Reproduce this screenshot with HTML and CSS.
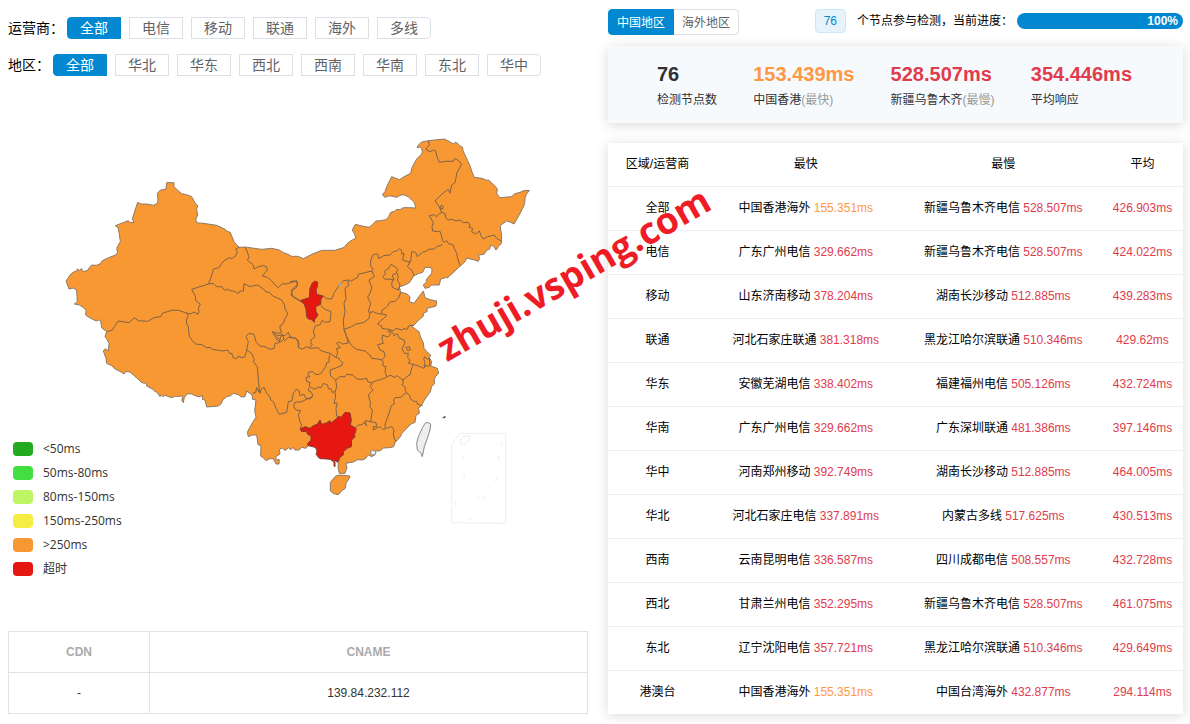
FILE: index.html
```
<!DOCTYPE html>
<html lang="zh-CN">
<head>
    <meta charset="UTF-8">
    <meta name="viewport" content="width=device-width, initial-scale=1.0">
    <title>节点检测</title>
    <link rel="stylesheet" href="styles.css">
</head>
<body>
    <div class="container">
        <div class="left">
            <div class="filter">
                <span class="filter-label">运营商：</span>
                <div class="filter-group">
                    <button class="active">全部</button>
                    <button>电信</button>
                    <button>移动</button>
                    <button>联通</button>
                    <button>海外</button>
                    <button>多线</button>
                </div>
            </div>
            <div class="filter">
                <span class="filter-label">地区：</span>
                <div class="filter-group">
                    <button class="active">全部</button>
                    <button>华北</button>
                    <button>华东</button>
                    <button>西北</button>
                    <button>西南</button>
                    <button>华南</button>
                    <button>东北</button>
                    <button>华中</button>
                </div>
            </div>
            <div class="map">
                <svg viewBox="24 228 1740 1665" role="img" aria-label="中国地图">
                    <!-- mainland -->
                    <path class="land" d="M198,843 L203,836 210,825 219,817 230,813 232,807 238,811 245,806 250,815 263,811 268,803 275,795 289,796 300,792 307,782 326,773 347,765 353,757 350,745 355,735 361,725 358,704 355,685 346,677 364,670 385,662 389,667 402,668 397,657 404,634 413,607 423,612 441,612 460,616 472,610 474,601 472,580 480,571 498,567 500,548 522,548 522,560 532,570 545,581 560,584 575,590 580,599 585,608 593,617 590,628 593,645 588,656 588,665 596,669 610,670 650,676 663,682 675,688 683,695 690,696 696,710 702,725 710,734 717,742 735,741 785,748 815,745 838,750 850,758 862,762 875,769 895,769 903,773 910,776 935,763 965,751 1005,751 1033,742 1040,732 1048,725 1068,714 1063,701 1057,690 1066,673 1086,678 1107,682 1117,674 1128,663 1142,662 1158,659 1166,650 1172,637 1184,634 1190,628 1200,629 1210,623 1230,623 1248,624 1243,608 1235,600 1225,590 1210,584 1200,586 1190,592 1175,588 1165,588 1155,592 1150,588 1148,582 1155,575 1160,560 1175,530 1198,539 1216,528 1232,520 1235,505 1243,489 1252,475 1265,462 1267,455 1265,445 1258,441 1251,443 1256,434 1265,426 1285,422 1333,417 1347,424 1360,432 1366,427 1373,430 1379,437 1388,442 1389,452 1395,465 1403,482 1410,497 1416,516 1423,532 1446,535 1460,541 1466,540 1478,552 1487,560 1492,568 1490,580 1499,593 1535,590 1543,582 1560,577 1572,572 1588,571 1579,583 1575,595 1574,611 1568,625 1553,653 1542,672 1530,666 1520,663 1500,677 1505,705 1504,730 1496,739 1488,750 1481,739 1473,735 1468,748 1460,751 1452,763 1435,765 1439,775 1435,784 1420,779 1400,774 1395,785 1382,797 1343,833 1337,833 1322,837 1318,855 1295,855 1287,862 1275,865 1270,855 1280,845 1278,840 1288,827 1295,820 1296,809 1292,803 1275,802 1268,817 1255,821 1242,827 1228,848 1210,857 1198,860 1202,877 1220,881 1230,890 1228,905 1242,910 1253,895 1270,873 1275,893 1290,899 1310,903 1308,918 1295,922 1280,925 1282,934 1270,940 1270,949 1257,959 1245,972 1237,980 1248,989 1257,995 1262,1012 1270,1029 1272,1045 1281,1056 1292,1065 1288,1072 1295,1085 1292,1098 1312,1105 1316,1120 1307,1129 1302,1140 1304,1150 1295,1160 1290,1177 1280,1190 1273,1201 1265,1215 1256,1225 1258,1240 1248,1246 1245,1267 1233,1272 1220,1285 1206,1300 1199,1313 1185,1328 1181,1340 1170,1343 1150,1344 1141,1352 1127,1353 1125,1364 1115,1370 1105,1365 1095,1377 1085,1380 1073,1379 1060,1386 1037,1390 1041,1402 1035,1420 1018,1420 1014,1402 1015,1390 1005,1380 955,1373 947,1342 925,1337 918,1345 905,1342 898,1350 885,1350 879,1342 873,1349 865,1343 855,1352 848,1344 838,1348 840,1362 827,1370 829,1379 838,1379 837,1392 828,1392 820,1376 809,1376 798,1382 791,1374 782,1368 783,1337 774,1334 770,1305 757,1305 745,1310 742,1297 748,1285 758,1267 768,1252 764,1232 768,1200 758,1198 756,1185 740,1173 735,1190 724,1191 715,1184 700,1180 692,1187 680,1190 668,1200 664,1211 655,1218 620,1221 615,1200 607,1198 607,1187 597,1190 585,1187 575,1182 563,1181 553,1192 550,1208 545,1200 548,1194 545,1187 535,1190 527,1188 515,1193 502,1189 495,1185 490,1190 483,1184 480,1190 473,1179 462,1172 459,1168 440,1158 439,1150 425,1148 414,1137 400,1125 390,1116 378,1114 372,1122 360,1114 345,1107 335,1097 320,1090 318,1075 310,1053 316,1046 325,1053 327,1030 321,1018 315,1010 320,995 305,983 302,962 295,960 289,963 278,958 267,952 257,945 258,932 253,925 239,915 223,912 232,905 230,870 219,864 207,867 Z"/>

                    <!-- western provinces -->
                    <g class="border" transform="translate(150 510)">
                        <path d="M170,485 L188,480 193,470 205,453 237,458 246,450 252,443 265,452 293,454 312,443 333,440 337,430 365,421 385,421 410,429 422,432 432,426 444,433 447,424 445,415 451,402 438,393 436,378 425,358 475,342"/>
                        <path d="M475,342 L484,320 490,297 507,293 515,280 525,270 540,263 544,266 557,258 562,245 556,238 567,232"/>
                        <path d="M475,342 L490,340 495,346 500,350 515,350 525,362 532,357 540,362 551,363 565,371 570,363 580,363 582,341 590,345 600,350 610,347 622,345 630,350 640,357 647,365 660,368 668,378 680,383 695,390 703,403 705,417 714,432 705,445 700,460 690,467 690,475 695,488 683,490 667,485 675,500 690,508 688,518 675,520 672,535 660,538 645,530 630,528 618,515 612,493 597,490 588,500 595,515 590,540"/>
                        <path d="M410,429 L415,438 410,447 409,460 415,470 418,500 427,512 437,522 455,524 470,533 480,532 487,538 505,541 520,543 533,540 540,552 545,549 549,563 560,566 565,558 575,563 585,560 590,540"/>
                        <path d="M590,540 L605,550 612,567 611,576 622,590 626,640 629,665 620,652 617,668 608,670"/>
                        <path d="M585,231 L592,246 597,262 592,270 610,285 612,297 625,290 640,287 650,290 652,300 637,318 652,322 665,332 675,345 685,353 697,341 710,342 722,338 740,333 743,345 737,355 727,360 723,375 733,383 748,392"/>
                        <path d="M690,508 L695,495 705,497 715,487 720,500 740,507 747,520 745,533"/>
                        <path d="M672,487 L680,498 698,494 702,507 692,516 678,507"/>
                    </g>

                    <!-- north east -->
                    <g class="border" transform="translate(870 360)">
                        <path d="M415,62 L418,75 407,88 420,95 430,90 437,92 440,108 448,127 466,124 490,124 495,115 505,122 515,132 500,160 498,174 495,188 485,195 480,220 475,208 455,223 435,243 444,255 450,265 453,256 460,259 458,267 450,265 455,278"/>
                        <path d="M455,278 L465,280 467,292 473,300 487,298 498,303 510,300 520,308 535,307 540,315 537,322 548,325 545,335 557,342 568,333 573,347 580,357 593,350 605,347 613,345 620,355 634,363"/>
                        <path d="M455,278 L446,282 440,290 432,284 418,287 430,308 426,320 428,333 445,335 451,335 455,350 458,363"/>
                        <path d="M458,363 L463,367 470,362 476,372 488,373 493,385 500,400 503,415 510,437"/>
                        <path d="M458,374 L440,380 432,387 415,388 412,392 398,397 382,410 377,397 365,395 362,425 355,427"/>
                        <path d="M245,450 L250,446 242,440 242,420 250,403 263,402 266,416 281,407 300,405 310,395 322,392 328,386 335,391 335,402 342,400 338,420 360,427 352,440 366,452 372,467"/>
                    </g>

                    <!-- north and centre -->
                    <g class="border" transform="translate(870 780)">
                        <path d="M0,65 L20,62 22,75 12,82 4,92 8,108 30,122"/>
                        <path d="M100,108 L110,116 125,117 133,98 143,82 160,62 178,60"/>
                        <path class="gap" d="M145,76 L156,67 150,79 Z"/>
                        <path d="M92,137 L105,148 123,155 120,185 103,187 97,180 91,194 75,198 70,215 75,230 63,240 62,248 67,255 58,262"/>
                        <path d="M-18,243 L-5,232 18,235 24,242 25,262 36,268 50,260 60,265 85,263 91,271 105,276 120,280 137,292"/>
                        <path d="M137,292 L143,280 140,265 151,263 140,250 148,246 158,252 175,249 170,230 162,208"/>
                        <path d="M178,60 L173,66 177,75 165,85 168,115 162,130 165,155 160,182 162,208"/>
                        <path d="M178,60 L183,64 195,56 203,53 205,43 222,39 240,34 250,36"/>
                        <path d="M245,32 L253,50 237,60 242,75 246,81 240,100 233,112 242,130 235,155 240,157"/>
                        <path d="M240,157 L237,175 224,186 210,190 198,192 185,200 162,208"/>
                        <path d="M240,157 L250,155 263,161 275,162 276,150 285,145 295,135 299,126 315,124 325,115 332,97"/>
                        <path d="M278,50 L287,42 283,34 294,27 303,13 318,22 323,29 317,41 307,45 312,60 295,57 285,58 Z"/>
                        <path d="M320,38 L325,50 322,60 330,75 325,90 307,82 305,70 310,58"/>
                        <path d="M275,162 L290,165 282,175 273,181 263,192 275,198 275,205 295,208 310,212 318,205 335,210 345,205 350,210 356,198 370,195"/>
                        <path d="M293,214 L303,220 296,230 290,230 278,225 276,238 280,250 263,254 270,270 282,275 285,290 275,300"/>
                        <path d="M162,208 L170,230 178,247 188,260 200,268 225,273 240,285 245,295 264,297 275,300"/>
                        <path d="M295,210 L308,217 312,227 322,221 327,234 342,240 345,250 336,265 343,280 355,280 353,293 360,300 355,310 370,313"/>
                        <path d="M348,262 L358,260 361,270 352,271 Z"/>
                        <path d="M402,318 L405,307 401,297 405,290 412,298 418,294 420,318 Z"/>
                        <path d="M370,313 L385,318 402,325 407,316"/>
                        <path d="M370,313 L366,323 363,333 360,345 350,350 340,360"/>
                        <path d="M275,300 L280,307 278,317 288,320 285,334 290,350 303,346 312,353 320,347 340,360"/>
                        <path d="M120,283 L117,294 118,306 110,308 108,318 95,338 85,344 75,342 68,335 57,336 53,345 60,350 48,352 50,365 60,367 58,380 70,385"/>
                        <path d="M137,292 L147,295 149,300 158,308 156,316 135,325 120,330 122,348 137,360"/>
                    </g>

                    <!-- south -->
                    <g class="border" transform="translate(690 1080)">
                        <path d="M82,90 L90,100 95,85 103,83 110,100 120,110 122,120 130,125 138,145 148,163 170,157 175,125 186,122 190,100 198,88 207,92 210,107 222,103 227,114 240,117 248,108 245,97 236,93 236,84"/>
                        <path d="M248,110 L225,120 215,125 195,127 191,139 198,150 212,152 205,165 210,185 215,195 210,207"/>
                        <path d="M250,90 L255,84 260,86 265,80 272,84 280,70 293,75 295,87 303,86 306,97 315,95"/>
                        <path d="M317,60 L320,80 315,97 317,108 312,130 322,129 318,145 320,170"/>
                        <path d="M317,60 L330,50 345,50 350,43 368,45 380,56 390,58 400,57 410,55 414,66 424,68"/>
                        <path d="M427,68 L420,80 430,90 422,97 415,105 422,130 419,140 427,150 422,185"/>
                        <path d="M424,68 L440,62 455,58 470,52"/>
                        <path d="M518,60 L520,70 515,74 525,80 526,92 530,98 522,102"/>
                        <path d="M530,98 L540,107 540,115 550,124 560,124 563,133 578,137"/>
                        <path d="M522,102 L513,112 495,113 490,120 494,130 483,138 480,150 472,175 466,190 465,205"/>
                        <path d="M465,205 L475,203 485,200 492,210 490,225 497,245"/>
                        <path d="M376,203 L385,195 397,194 402,187 410,198 405,182 422,185 438,188 440,200 430,200 430,210 440,204 450,200 458,208 465,208"/>
                    </g>

                    <g transform="translate(690 1080)">
                        <path class="land" d="M317,348 L330,345 360,348 358,355 348,370 346,385 335,392 325,404 311,401 301,393 301,367 Z"/>
                        <path class="timeout" d="M210,207 L225,200 240,205 250,197 262,193 270,180 275,193 288,190 300,182 303,189 320,176 325,169 334,172 345,157 360,159 364,180 361,195 378,205 377,217 373,223 375,230 365,240 364,260 352,265 340,275 340,285 330,291 325,305 313,301 310,305 300,297 270,296 258,283 263,273 257,262 233,256 233,250 243,241 243,228 233,223 229,214 215,215 Z"/>
                        <path class="timeout" d="M312,304 V318 L315,320 V304"/>
                        <path class="empty" d="M421,275 L429,270 438,276 435,284 424,285 Z"/>
                        <path class="empty" d="M592,187 L602,192 600,210 592,235 583,260 577,290 572,278 562,270 560,250 565,230 578,202 585,190 Z"/>
                        <path class="islet" d="M638,173 L646,169 644,174 Z"/>
                    </g>
                    <path class="timeout" transform="translate(870 780)" d="M75,63 L83,67 82,80 78,90 80,103 100,108 93,117 92,133 77,140 78,155 84,165 73,180 73,187 63,178 55,177 50,170 48,148 43,132 30,122 45,117 58,113 60,85 67,69 Z"/>

                    <!-- south china sea inset -->
                    <g class="inset" transform="translate(690 1080)">
                        <path d="M690,220 H827 V490 L665,488 V253 Z"/>
                        <path d="M698,230 L718,226 717,238 704,255 691,250 692,238 Z"/>
                        <path d="M818,243 L812,257 M696,287 L701,299 M806,288 L805,301 M704,346 L701,358 M801,349 L796,364 M675,424 L676,437 M690,418 H694 M741,415 L748,411 M767,409 L758,422 M714,478 L725,475"/>
                    </g>
                </svg>
                <ul class="legend">
                    <li><i class="c50"></i>&lt;50ms</li>
                    <li><i class="c80"></i>50ms-80ms</li>
                    <li><i class="c150"></i>80ms-150ms</li>
                    <li><i class="c250"></i>150ms-250ms</li>
                    <li><i class="slow"></i>&gt;250ms</li>
                    <li><i class="out"></i>超时</li>
                </ul>
            </div>
            <table class="cdn">
                <tr><th>CDN</th><th>CNAME</th></tr>
                <tr><td>-</td><td>139.84.232.112</td></tr>
            </table>
        </div>

        <div class="right">
            <div class="topbar">
                <div class="tabs">
                    <button class="active">中国地区</button><button>海外地区</button>
                </div>
                <div class="status">
                    <span class="tag">76</span>
                    <span class="status-text">个节点参与检测，当前进度：</span>
                    <div class="progress">100%</div>
                </div>
            </div>
            <div class="stats">
                <div class="stat"><b>76</b><span>检测节点数</span></div>
                <div class="stat"><b class="orange">153.439ms</b><span>中国香港<em>(最快)</em></span></div>
                <div class="stat"><b class="red">528.507ms</b><span>新疆乌鲁木齐<em>(最慢)</em></span></div>
                <div class="stat"><b class="red">354.446ms</b><span>平均响应</span></div>
            </div>
            <table class="result">
                <colgroup><col class="col-name"><col class="col-node"><col class="col-node"><col class="col-avg"></colgroup>
                <tr><th>区域/运营商</th><th>最快</th><th>最慢</th><th>平均</th></tr>
                <tr><td>全部</td><td>中国香港海外 <span class="orange">155.351ms</span></td><td>新疆乌鲁木齐电信 <span class="red">528.507ms</span></td><td class="red">426.903ms</td></tr>
                <tr><td>电信</td><td>广东广州电信 <span class="red">329.662ms</span></td><td>新疆乌鲁木齐电信 <span class="red">528.507ms</span></td><td class="red">424.022ms</td></tr>
                <tr><td>移动</td><td>山东济南移动 <span class="red">378.204ms</span></td><td>湖南长沙移动 <span class="red">512.885ms</span></td><td class="red">439.283ms</td></tr>
                <tr><td>联通</td><td>河北石家庄联通 <span class="red">381.318ms</span></td><td>黑龙江哈尔滨联通 <span class="red">510.346ms</span></td><td class="red">429.62ms</td></tr>
                <tr><td>华东</td><td>安徽芜湖电信 <span class="red">338.402ms</span></td><td>福建福州电信 <span class="red">505.126ms</span></td><td class="red">432.724ms</td></tr>
                <tr><td>华南</td><td>广东广州电信 <span class="red">329.662ms</span></td><td>广东深圳联通 <span class="red">481.386ms</span></td><td class="red">397.146ms</td></tr>
                <tr><td>华中</td><td>河南郑州移动 <span class="red">392.749ms</span></td><td>湖南长沙移动 <span class="red">512.885ms</span></td><td class="red">464.005ms</td></tr>
                <tr><td>华北</td><td>河北石家庄电信 <span class="red">337.891ms</span></td><td>内蒙古多线 <span class="red">517.625ms</span></td><td class="red">430.513ms</td></tr>
                <tr><td>西南</td><td>云南昆明电信 <span class="red">336.587ms</span></td><td>四川成都电信 <span class="red">508.557ms</span></td><td class="red">432.728ms</td></tr>
                <tr><td>西北</td><td>甘肃兰州电信 <span class="red">352.295ms</span></td><td>新疆乌鲁木齐电信 <span class="red">528.507ms</span></td><td class="red">461.075ms</td></tr>
                <tr><td>东北</td><td>辽宁沈阳电信 <span class="red">357.721ms</span></td><td>黑龙江哈尔滨联通 <span class="red">510.346ms</span></td><td class="red">429.649ms</td></tr>
                <tr><td>港澳台</td><td>中国香港海外 <span class="orange">155.351ms</span></td><td>中国台湾海外 <span class="red">432.877ms</span></td><td class="red">294.114ms</td></tr>
            </table>
        </div>
        <div class="watermark">zhuji.vsping.com</div>
    </div>
</body>
</html>
```
FILE: styles.css
```
* {
    box-sizing: border-box;
}
body {
    margin: 0;
    font-family: "Liberation Sans", "Noto Sans CJK SC", sans-serif;
    font-size: 12px;
    line-height: 18px;
    color: #000;
    background: #fff;
}
button {
    font-family: inherit;
    cursor: pointer;
}
.container {
    position: relative;
    display: grid;
    grid-template-columns: minmax(0, 580fr) minmax(0, 575fr);
    gap: 20px;
    padding: 9px 7px 10px 8px;
}

/* left side */
.left {
    padding-top: 8px;
}
.filter {
    display: flex;
    align-items: center;
    gap: 3px;
    margin-bottom: 15px;
    font-size: 14px;
}
.filter + .filter {
    margin-bottom: 0;
}
.filter-group {
    display: flex;
    gap: 8px;
}
.filter-group button {
    width: 54px;
    height: 22px;
    padding: 0;
    border: 1px solid #dcdfe6;
    background: #fff;
    color: #606266;
    font-size: 14px;
    line-height: 20px;
}
.filter-group button:first-child {
    border-radius: 4px 0 0 4px;
}
.filter-group button:last-child {
    border-radius: 0 4px 4px 0;
}
.filter-group button.active,
.tabs button.active {
    background: #0188d1;
    border-color: #0188d1;
    color: #fff;
}
.map {
    position: relative;
}
.map svg {
    display: block;
    width: 100%;
}
.land, .timeout, .empty {
    stroke: #8c7a68;
    stroke-width: 3;
    stroke-linejoin: round;
}
.land {
    fill: #f79833;
}
.timeout {
    fill: #e61610;
    stroke: #8a3a35;
}
.empty {
    fill: #eee;
    stroke: #888;
}
.islet {
    fill: #444;
    stroke: #444;
    stroke-width: 2;
}
.border {
    fill: none;
    stroke: #806347;
    stroke-width: 3;
    stroke-linejoin: round;
}
.border .gap {
    fill: #ddd;
    stroke: #999;
}
.inset {
    fill: none;
    stroke: #eee;
    stroke-width: 3;
}
.legend {
    position: absolute;
    left: 5px;
    bottom: 50px;
    margin: 0;
    padding: 0;
    list-style: none;
    font-family: "Open Sans", "Noto Sans CJK SC", sans-serif;
    color: #333;
}
.legend li {
    display: flex;
    align-items: center;
    gap: 10px;
    height: 24px;
}
.legend i {
    width: 20px;
    height: 14px;
    border-radius: 4px;
}
.c50 { background: #23aa1e; }
.c80 { background: #43df40; }
.c150 { background: #bef663; }
.c250 { background: #f6ed44; }
.slow { background: #f79833; }
.out { background: #e61610; }

.cdn {
    width: 100%;
    border-collapse: collapse;
    text-align: center;
    color: #333;
}
.cdn th, .cdn td {
    height: 41px;
    padding: 0;
    border: 1px solid #dfe2ea;
}
.cdn th {
    color: #aaa;
}
.cdn th:first-child {
    width: 141px;
}

/* right side */
.topbar {
    display: flex;
    justify-content: space-between;
    align-items: flex-start;
    margin-bottom: 11px;
}
.tabs {
    display: flex;
}
.tabs button {
    height: 26px;
    padding: 0 8px 2px;
    border: 1px solid #dcdfe6;
    background: #fff;
    color: #606266;
    font-size: 12px;
}
.tabs button:first-child {
    border-radius: 4px 0 0 4px;
}
.tabs button:last-child {
    border-left: 0;
    border-radius: 0 4px 4px 0;
}
.status {
    display: flex;
    align-items: center;
    height: 24px;
}
.tag {
    padding: 2px 8px;
    border: 1px solid #cce7f6;
    border-radius: 4px;
    background: #e6f3fa;
    color: #0188d1;
    line-height: 18px;
    margin-right: 11px;
}
.status-text {
    margin-right: 4px;
}
.progress {
    width: 166px;
    height: 16px;
    padding-right: 5px;
    border-radius: 8px;
    background: #0188d1;
    color: #fff;
    font-weight: bold;
    line-height: 16px;
    text-align: right;
}
.stats {
    display: flex;
    justify-content: space-between;
    height: 77px;
    margin-bottom: 20px;
    padding: 16px 51px 0 49px;
    background: #f6fafd;
    box-shadow: 0 2px 12px rgba(0,0,0,0.15);
}
.stat b {
    display: block;
    margin-bottom: 5px;
    font-size: 20px;
    line-height: 24px;
    color: #303133;
}
.stat span {
    color: #303133;
}
.stat em {
    font-style: normal;
    color: #999;
}
.stat .orange, .orange {
    color: #ff9845;
}
.stat .red, .red {
    color: #e03c4c;
}
.result {
    width: 100%;
    table-layout: fixed;
    border-collapse: collapse;
    text-align: center;
    box-shadow: 0 2px 12px rgba(0,0,0,0.15);
}
.result th, .result td {
    height: 44px;
    padding: 0 0 1px;
    border-bottom: 1px solid #ebeef5;
}
.result th {
    height: 43px;
    font-weight: normal;
}
.result tr:last-child td {
    border-bottom: 0;
}
.col-name { width: 99px; }
.col-avg { width: 81px; }

.watermark {
    position: absolute;
    left: 452px;
    top: 323px;
    font-family: "Open Sans", sans-serif;
    font-size: 37px;
    font-weight: bold;
    line-height: 48px;
    color: #ee1c25;
    transform: rotate(-30deg);
    transform-origin: 0 100%;
    pointer-events: none;
}
```
